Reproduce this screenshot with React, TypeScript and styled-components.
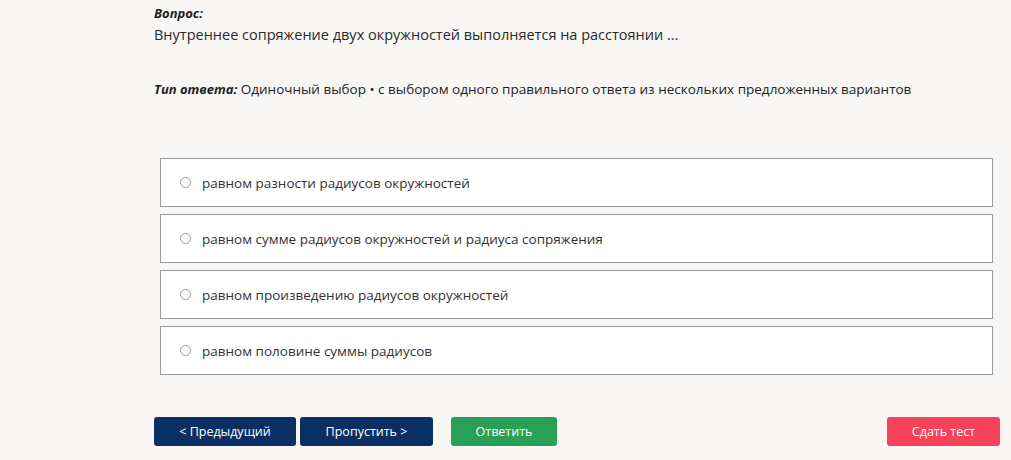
import styled, { createGlobalStyle } from 'styled-components';

const GlobalStyle = createGlobalStyle`
  html, body {
    margin: 0;
    padding: 0;
    background: #f8f7f5;
  }
  body {
    font-family: "Open Sans", "Liberation Sans", sans-serif;
    color: #222;
  }
`;

const options = [
  'равном разности радиусов окружностей',
  'равном сумме радиусов окружностей и радиуса сопряжения',
  'равном произведению радиусов окружностей',
  'равном половине суммы радиусов',
];

function App() {
  return (
    <>
      <GlobalStyle />
      <Page>
        <Label>Вопрос:</Label>
        <Question>Внутреннее сопряжение двух окружностей выполняется на расстоянии ...</Question>
        <AnswerType>
          <Label as="span">Тип ответа:</Label> Одиночный выбор • с выбором одного правильного ответа из нескольких предложенных вариантов
        </AnswerType>
        <Options>
          {options.map((o) => (
            <Option key={o}>
              <Radio />
              <span>{o}</span>
            </Option>
          ))}
        </Options>
        <Actions>
          <Button $color="#0b2f62">&lt; Предыдущий</Button>
          <Button $color="#0b2f62" $width={133}>Пропустить &gt;</Button>
          <Button $color="#28a156" $width={106} $gap={14}>Ответить</Button>
          <Spacer />
          <Button $color="#f6435a" $width={113}>Сдать тест</Button>
        </Actions>
      </Page>
    </>
  );
}

const Page = styled.div`
  padding: 4px 11px 0 154px;
  height: 460px;
  box-sizing: border-box;
`;

const Label = styled.div`
  font-weight: 700;
  font-style: italic;
  font-size: 13px;
  line-height: 18px;
  color: #222;
`;

const Question = styled.div`
  font-size: 14.5px;
  line-height: 20px;
  margin-top: 3px;
  color: #2a2a2a;
`;

const AnswerType = styled.div`
  margin-top: 35px;
  font-size: 13.5px;
  line-height: 18px;
  color: #222;
`;

const Options = styled.div`
  display: flex;
  flex-direction: column;
  gap: 7px;
  margin: 60px 7px 0 6px;
`;

const Option = styled.label`
  display: flex;
  align-items: center;
  gap: 11px;
  height: 49px;
  box-sizing: border-box;
  padding-left: 19px;
  background: #fff;
  border: 1px solid #9a9a9a;
  font-size: 13.5px;
  color: #333;
`;

const Radio = styled.span`
  width: 9px;
  height: 9px;
  border: 1px solid #999;
  border-radius: 50%;
  background: #fff;
`;

const Actions = styled.div`
  display: flex;
  align-items: center;
  gap: 4px;
  margin-top: 42px;
`;

const Spacer = styled.div`
  flex: 1;
`;

const Button = styled.button<{ $color: string; $width?: number; $gap?: number }>`
  width: ${(p) => p.$width ?? 142}px;
  height: 29px;
  margin-left: ${(p) => p.$gap ?? 0}px;
  border: none;
  border-radius: 3px;
  background: ${(p) => p.$color};
  color: #fff;
  font-family: "Open Sans", "Liberation Sans", sans-serif;
  font-size: 12.5px;
  cursor: pointer;
`;

export default App;
